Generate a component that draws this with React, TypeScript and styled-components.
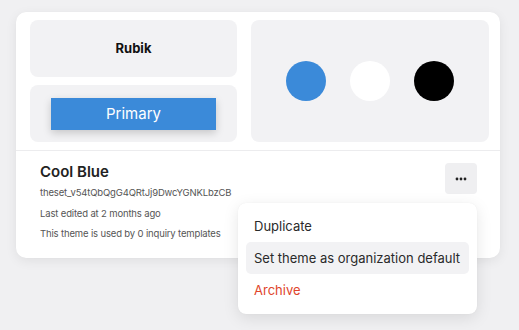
import React from 'react';
import styled, { createGlobalStyle } from 'styled-components';

const GlobalStyle = createGlobalStyle`
    html, body {
        margin: 0;
        padding: 0;
        background: #f0f0f2;
        font-family: Inter, 'Liberation Sans', sans-serif;
        -webkit-font-smoothing: antialiased;
    }
`;

const swatches = ['#3b8ad9', '#ffffff', '#000000'];

const menuItems = [
    { label: 'Duplicate', active: false, danger: false },
    { label: 'Set theme as organization default', active: true, danger: false },
    { label: 'Archive', active: false, danger: true },
];

export default function App() {
    return (
        <>
            <GlobalStyle />
            <Page>
                <Card>
                    <Preview>
                        <LeftColumn>
                            <PreviewBox>
                                <FontName>Rubik</FontName>
                            </PreviewBox>
                            <PreviewBox>
                                <PrimaryButton>Primary</PrimaryButton>
                            </PreviewBox>
                        </LeftColumn>
                        <SwatchBox>
                            {swatches.map((c) => (
                                <Swatch key={c} $color={c} />
                            ))}
                        </SwatchBox>
                    </Preview>
                    <Details>
                        <Info>
                            <ThemeName>Cool Blue</ThemeName>
                            <ThemeId>theset_v54tQbQgG4QRtJj9DwcYGNKLbzCB</ThemeId>
                            <Meta>Last edited at 2 months ago</Meta>
                            <Meta>This theme is used by 0 inquiry templates</Meta>
                        </Info>
                        <MoreButton aria-label="More">
                            <svg width="12" height="4" viewBox="0 0 12 4">
                                <circle cx="2" cy="2" r="1.4" fill="#222" />
                                <circle cx="6" cy="2" r="1.4" fill="#222" />
                                <circle cx="10" cy="2" r="1.4" fill="#222" />
                            </svg>
                        </MoreButton>
                    </Details>
                    <Menu>
                        {menuItems.map((item) => (
                            <MenuItem key={item.label} $active={item.active} $danger={item.danger}>
                                {item.label}
                            </MenuItem>
                        ))}
                    </Menu>
                </Card>
            </Page>
        </>
    );
}

const Page = styled.div`
    padding: 12px 0 0 16px;
    width: 519px;
    height: 330px;
    box-sizing: border-box;
`;

const Card = styled.div`
    position: relative;
    width: 484px;
    height: 246px;
    background: #ffffff;
    border-radius: 10px;
    box-shadow: 0 3px 12px rgba(0, 0, 0, 0.07), 0 0 1px rgba(0, 0, 0, 0.04);
    display: flex;
    flex-direction: column;
`;

const Preview = styled.div`
    display: grid;
    grid-template-columns: 207px 238px;
    gap: 14px;
    padding: 8px 11px 8px 14px;
    border-bottom: 1px solid #ececee;
`;

const LeftColumn = styled.div`
    display: flex;
    flex-direction: column;
    gap: 8px;
`;

const PreviewBox = styled.div`
    height: 57px;
    background: #f2f2f4;
    border-radius: 8px;
    display: flex;
    align-items: center;
    justify-content: center;
`;

const FontName = styled.span`
    font-size: 13px;
    font-weight: 700;
    color: #111;
    margin-top: -2px;
`;

const PrimaryButton = styled.div`
    width: 165px;
    height: 32px;
    background: #3b8ad9;
    color: #ffffff;
    font-size: 15px;
    display: flex;
    align-items: center;
    justify-content: center;
    box-shadow: 0 3px 8px rgba(0, 0, 0, 0.18);
`;

const SwatchBox = styled.div`
    height: 122px;
    background: #f2f2f4;
    border-radius: 8px;
    display: flex;
    align-items: center;
    justify-content: center;
    gap: 24px;
`;

const Swatch = styled.div<{ $color: string }>`
    width: 40px;
    height: 40px;
    border-radius: 50%;
    background: ${({ $color }) => $color};
`;

const Details = styled.div`
    flex: 1;
    display: flex;
    justify-content: space-between;
    align-items: flex-start;
    padding: 11px 23px 0 24px;
`;

const Info = styled.div`
    display: flex;
    flex-direction: column;
`;

const ThemeName = styled.div`
    font-size: 15px;
    font-weight: 600;
    color: #222;
    line-height: 20px;
`;

const ThemeId = styled.div`
    margin-top: 4px;
    font-size: 9.5px;
    letter-spacing: -0.15px;
    color: #555;
    line-height: 14px;
`;

const Meta = styled.div`
    margin-top: 7px;
    font-size: 9.5px;
    letter-spacing: -0.15px;
    color: #555;
    line-height: 13px;
`;

const MoreButton = styled.button`
    width: 32px;
    height: 31px;
    margin-top: 1px;
    border: none;
    border-radius: 4px;
    background: #efeff1;
    display: flex;
    align-items: center;
    justify-content: center;
    padding: 0;
`;

const Menu = styled.div`
    position: absolute;
    left: 222px;
    top: 191px;
    width: 239px;
    box-sizing: border-box;
    padding: 7px 8px 8px;
    background: #ffffff;
    border-radius: 8px;
    box-shadow: 0 4px 16px rgba(0, 0, 0, 0.1), 0 0 1px rgba(0, 0, 0, 0.08);
    display: flex;
    flex-direction: column;
`;

const MenuItem = styled.div<{ $active: boolean; $danger: boolean }>`
    height: 32px;
    padding: 0 8px;
    border-radius: 5px;
    display: flex;
    align-items: center;
    font-size: 13px;
    white-space: nowrap;
    color: ${({ $danger }) => ($danger ? '#e0452b' : '#2a2a2a')};
    background: ${({ $active }) => ($active ? '#f2f2f4' : 'transparent')};
`;
